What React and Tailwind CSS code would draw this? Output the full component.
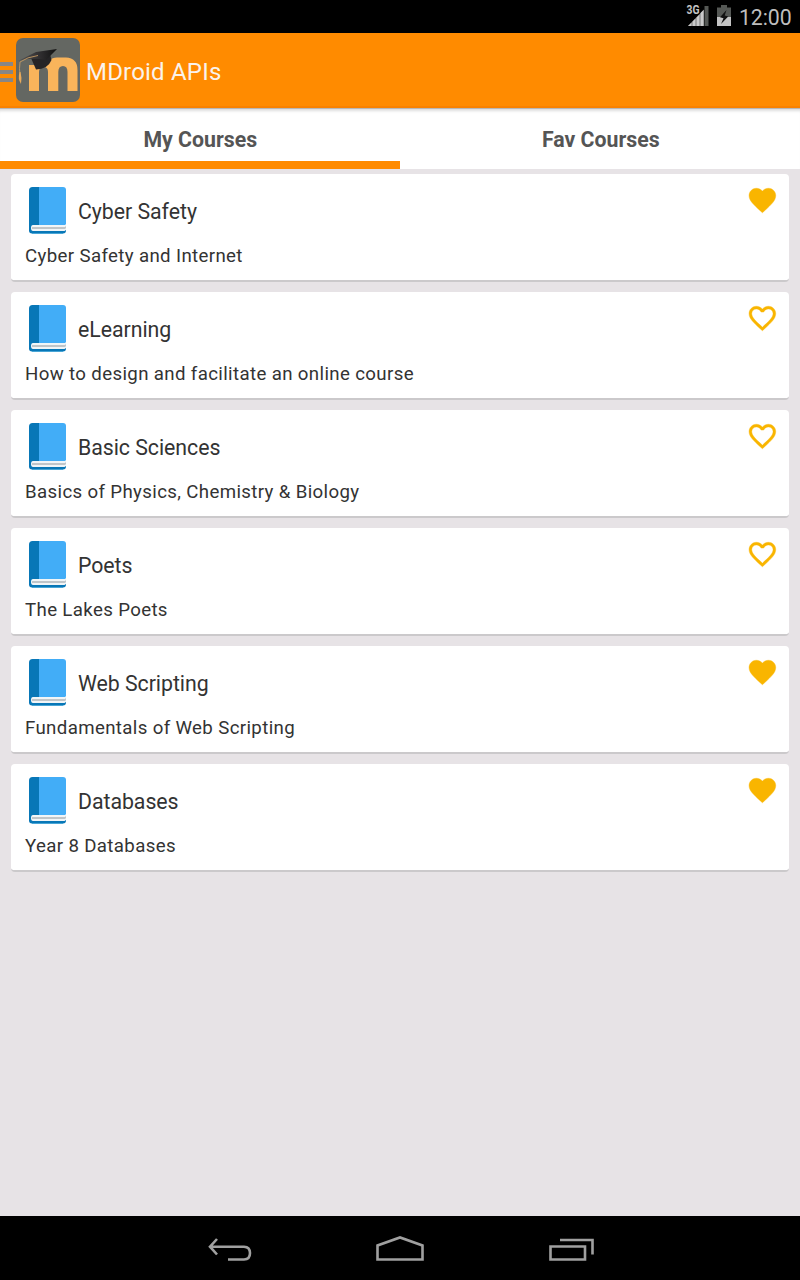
const courses = [
  { name: "Cyber Safety", summary: "Cyber Safety and Internet", fav: true },
  { name: "eLearning", summary: "How to design and facilitate an online course", fav: false },
  { name: "Basic Sciences", summary: "Basics of Physics, Chemistry & Biology", fav: false },
  { name: "Poets", summary: "The Lakes Poets", fav: false },
  { name: "Web Scripting", summary: "Fundamentals of Web Scripting", fav: true },
  { name: "Databases", summary: "Year 8 Databases", fav: true },
];

function StatusBar() {
  return (
    <div className="flex h-[33px] shrink-0 items-start justify-end bg-black pr-[9px]">
      <svg className="mt-1 mr-[7px] h-6 w-6" viewBox="0 0 24 24">
        <path d="M2 22 L18 5.500 V22Z" fill="#777" />
        <path d="M18.500 2H22.500V22H18.500Z" fill="#555855" />
        <path d="M2 22 L5.500 18.500 V22Z M6.500 17.500 L9.500 14.500 V22H6.500Z M10.500 13.500 L13.500 10.500 V22H10.500Z M14.500 9 L17.500 6 V22H14.500Z" fill="#cacaca" />
        <text x="0.500" y="10.300" fontFamily="Roboto" fontWeight="700" fontSize="12" textLength="13" lengthAdjust="spacingAndGlyphs" fill="#c4c4c4" stroke="#000" strokeWidth="2" paintOrder="stroke">3G</text>
      </svg>
      <svg className="mt-[5px] mr-[8px] h-[22px] w-[14px]" viewBox="0 0 14 22">
        <path d="M4 0H10V2.500H14V12H0V2.500H4Z" fill="#555855" />
        <path d="M0 12H14V21H0Z" fill="#c4c4c4" />
        <path d="M9.500 5 L3 12.300 L6.500 13.300 L4 19 L11.200 11.500 L7.700 10.400Z" fill="#111" />
      </svg>
      <span className="mt-[3px] w-[52px] text-[21.3px] leading-[29px] tracking-[-0.1px] whitespace-nowrap text-[#bebebe]">12:00</span>
    </div>
  );
}

function Logo() {
  return (
    <svg className="h-16 w-16" viewBox="0 0 64 64">
      <defs>
        <linearGradient id="cap" x1="0" y1="0" x2="1" y2="0">
          <stop offset="0" stopColor="#555" />
          <stop offset="0.500" stopColor="#343234" />
          <stop offset="1" stopColor="#111" />
        </linearGradient>
      </defs>
      <rect width="64" height="64" rx="7" fill="#646762" />
      <path d="M13 53V27H30Q31 25 34 22Q36 19.500 41 19.500H50Q61.500 20 61.500 32V53H51.500V34Q51.500 28 47 28Q42.300 28 42.300 34V53H32V34Q32 29 27.500 29Q23 29 23 34V53Z" fill="#f9b45b" />
      <path d="M15 20L20 31.500Q32 31 35.500 22L34 16Z" fill="#252426" />
      <path d="M2 23L20 14L41 11L30 22Q14 19 2 23Z" fill="url(#cap)" />
      <path d="M22 17.500Q11 19 4 24Q3 31 4 37" fill="none" stroke="#c49a62" strokeWidth="0.900" />
      <path d="M3.500 34Q1.500 41 5 46Q6 39 4.500 34Z" fill="#e9aa5b" />
    </svg>
  );
}

function ActionBar() {
  return (
    <header className="flex h-[75px] shrink-0 items-start border-b-2 border-[#f98200] bg-[#ff8b00]">
      <div className="mt-[29px] mr-[3px] flex w-[13px] flex-col gap-1">
        <div className="h-1 bg-[#888685]" />
        <div className="h-1 bg-[#888685]" />
        <div className="h-1 bg-[#888685]" />
      </div>
      <div className="mt-[5px]"><Logo /></div>
      <h1 className="mt-[23px] ml-[6px] text-[24px] leading-[32px] tracking-[0.2px] text-[#faf3ec]">MDroid APIs</h1>
    </header>
  );
}

function Tabs() {
  return (
    <nav className="flex h-[61px] shrink-0 border-t border-[#b9b7b5] bg-white text-center text-[21.3px] leading-[28px] font-bold text-[#555] shadow-[inset_0_4px_3px_-2px_#ddd]">
      <div className="h-full flex-1 border-b-8 border-[#ff8b00] pt-[17px] pl-px">My Courses</div>
      <div className="flex-1 pt-[17px] pl-[2px]">Fav Courses</div>
    </nav>
  );
}

function Book() {
  return (
    <svg className="h-[47px] w-[37px]" viewBox="0 0 37 47">
      <rect y="3" width="37" height="43.500" rx="3" fill="#0877b7" />
      <path d="M3.500 0H10V39H0V3.500Q0 0 3.500 0Z" fill="#0877b7" />
      <path d="M10 0H34Q37 0 37 3V38H10Z" fill="#42adf7" />
      <path d="M4 38H36L37 37V43L35.500 44H4Q2 44 2 41Q2 38 4 38Z" fill="#f1f5f7" />
      <path d="M3 40H36L37 39V41L36 42H3Z" fill="#bfc5c9" />
      <path d="M3 46.500H34" stroke="#48a5d5" />
    </svg>
  );
}

const HEART = "M12 21.35l-1.45-1.32C5.4 15.36 2 12.28 2 8.5 2 5.42 4.42 3 7.5 3c1.74 0 3.41.81 4.5 2.09C13.09 3.81 14.76 3 16.5 3 19.58 3 22 5.42 22 8.5c0 3.78-3.4 6.86-8.55 11.54L12 21.35z";
const HEART_OUTLINE = "M16.5 3c-1.74 0-3.41.81-4.5 2.09C10.91 3.81 9.24 3 7.5 3 4.42 3 2 5.42 2 8.5c0 3.78 3.4 6.86 8.55 11.54L12 21.35l1.45-1.32C18.6 15.36 22 12.28 22 8.5 22 5.42 19.58 3 16.5 3zm-4.4 15.55l-.1.1-.1-.1C7.14 14.24 4 11.39 4 8.5 4 6.5 5.5 5 7.5 5c1.54 0 3.04.99 3.57 2.36h1.87C13.46 5.99 14.96 5 16.5 5c2 0 3.5 1.5 3.5 3.5 0 2.89-3.14 5.74-7.900 10.050z";

function CourseCard({ course }) {
  return (
    <li className="h-[108px] rounded-[4px] border-b-2 border-[#cbc9cb] bg-white pt-[10px] pr-[11px] pl-[14px]">
      <div className="flex items-start">
        <div className="mt-[3px] ml-1"><Book /></div>
        <h2 className="mt-[14px] ml-3 flex-1 text-[21.3px] leading-[28px] tracking-[-0.04px]">{course.name}</h2>
        <svg className="h-8 w-8" viewBox="-0.300 -0.200 24 24" fill="#f9b500" stroke="#f9b500" strokeWidth="0.300">
          <path d={course.fav ? HEART : HEART_OUTLINE} />
        </svg>
      </div>
      <p className="mt-[9px] text-[18.67px] leading-[26px] tracking-[0.36px]">{course.summary}</p>
    </li>
  );
}

function NavigationBar() {
  return (
    <footer className="flex h-16 shrink-0 justify-center bg-black">
      <svg className="h-16 w-[400px]" viewBox="200 1216 400 64" fill="none" stroke="#a0a0a0" strokeWidth="2.600">
        <path d="M210 1246.700H244Q250 1247 250 1253Q250 1259.500 244 1259.500H228M217 1239L210 1246.700L217 1254.500" />
        <path d="M377.500 1259.500V1245.500L400 1237.500L422.500 1245.500V1259.500Z" />
        <path d="M550.500 1246.500H585V1259.500H550.500ZM560 1240H592.500V1254.500" />
      </svg>
    </footer>
  );
}

export default function App() {
  return (
    <div className="flex h-[1280px] w-[800px] flex-col overflow-hidden bg-[#e7e3e6] font-['Roboto',sans-serif] text-[#333]">
      <StatusBar />
      <ActionBar />
      <Tabs />
      <ul className="flex flex-1 flex-col gap-[10px] px-[11px] pt-[5px]">
        {courses.map((course) => <CourseCard key={course.name} course={course} />)}
      </ul>
      <NavigationBar />
    </div>
  );
}
